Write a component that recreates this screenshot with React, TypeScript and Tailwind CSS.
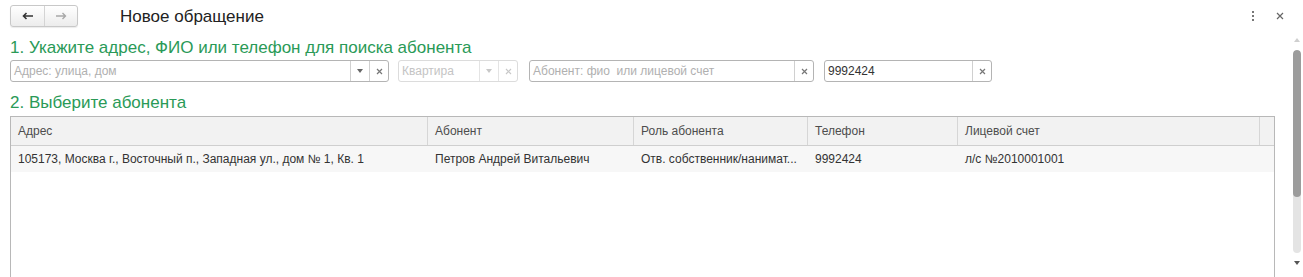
import { ReactNode } from 'react'

type Col = { title: string; width: string }

const cols: Col[] = [
  { title: 'Адрес', width: 'w-[417px]' },
  { title: 'Абонент', width: 'w-[206px]' },
  { title: 'Роль абонента', width: 'w-[174px]' },
  { title: 'Телефон', width: 'w-[150px]' },
  { title: 'Лицевой счет', width: 'w-[302px]' },
  { title: '', width: 'flex-1' },
]

const row = [
  '105173, Москва г., Восточный п., Западная ул., дом № 1, Кв. 1',
  'Петров Андрей Витальевич',
  'Отв. собственник/нанимат...',
  '9992424',
  'л/с №2010001001',
  '',
]

function Caret({ light }: { light?: boolean }) {
  return (
    <svg width="6" height="4" viewBox="0 0 6 4">
      <path d="M0 0h6L3 4z" fill={light ? '#c8c8c8' : '#666'} />
    </svg>
  )
}

function Cross({ light }: { light?: boolean }) {
  return (
    <svg width="7" height="7" viewBox="0 0 7 7">
      <path d="M1 1l5 5M6 1L1 6" stroke={light ? '#c8c8c8' : '#777'} strokeWidth="1.2" />
    </svg>
  )
}

function Field({
  width,
  text,
  placeholder,
  dropdown,
  disabled,
}: {
  width: string
  text?: string
  placeholder?: string
  dropdown?: boolean
  disabled?: boolean
}) {
  const border = disabled ? 'border-[#dcdcdc]' : 'border-[#b4b4b4]'
  return (
    <div className={`flex h-[22px] items-stretch rounded-[3px] border bg-white ${border} ${width}`}>
      <div
        className={`flex flex-1 items-center overflow-hidden whitespace-pre px-[3px] text-[12px] ${
          text ? 'text-[#333]' : disabled ? 'text-[#c4c4c4]' : 'text-[#b0b0b0]'
        }`}
      >
        {text ?? placeholder}
      </div>
      {dropdown && (
        <div className={`flex w-[19px] items-center justify-center border-l ${disabled ? 'border-[#e4e4e4]' : 'border-[#d0d0d0]'}`}>
          <Caret light={disabled} />
        </div>
      )}
      <div className={`flex w-[19px] items-center justify-center border-l ${disabled ? 'border-[#e4e4e4]' : 'border-[#d0d0d0]'}`}>
        <Cross light={disabled} />
      </div>
    </div>
  )
}

function Heading({ children }: { children: ReactNode }) {
  return <div className="h-[20px] text-[17px] leading-[20px] text-[#2a9a57]">{children}</div>
}

export default function App() {
  return (
    <div className="h-[277px] w-[1303px] overflow-hidden bg-white font-['Liberation_Sans',Arial,sans-serif] text-[#333]">
      {/* top bar */}
      <div className="mt-[5px] flex h-[22px] items-center pl-[10px] pr-[19px]">
        <div className="flex h-[22px] w-[68px] rounded-[3px] border border-[#c8c8c8] bg-gradient-to-b from-white to-[#ececec] shadow-[0_1px_1px_rgba(0,0,0,0.08)]">
          <div className="flex w-[34px] items-center justify-center border-r border-[#d4d4d4]">
            <svg width="12" height="8" viewBox="0 0 12 8">
              <path d="M11 4H2M4.5 1L1.5 4l3 3" stroke="#333" strokeWidth="1.6" fill="none" />
            </svg>
          </div>
          <div className="flex flex-1 items-center justify-center">
            <svg width="12" height="8" viewBox="0 0 12 8">
              <path d="M1 4h9M7.5 1l3 3-3 3" stroke="#a8a8a8" strokeWidth="1.4" fill="none" />
            </svg>
          </div>
        </div>
        <div className="ml-[42px] mt-[2px] text-[17px] text-[#222]">Новое обращение</div>
        <div className="ml-auto flex items-center gap-[22px]">
          <div className="flex flex-col gap-[2px]">
            <span className="h-[2px] w-[2px] bg-[#777]" />
            <span className="h-[2px] w-[2px] bg-[#777]" />
            <span className="h-[2px] w-[2px] bg-[#777]" />
          </div>
          <svg width="8" height="8" viewBox="0 0 8 8">
            <path d="M1 1l6 6M7 1L1 7" stroke="#666" strokeWidth="1.2" />
          </svg>
        </div>
      </div>

      <div className="mt-[10px] flex">
        <div className="flex-1 pl-[10px] pr-[17px]">
          <div className="pt-[1px]">
            <Heading>1. Укажите адрес, ФИО или телефон для поиска абонента</Heading>
          </div>
          <div className="mt-[2px] flex items-center">
            <Field width="w-[379px]" placeholder="Адрес: улица, дом" dropdown />
            <Field width="w-[120px] ml-[9px]" placeholder="Квартира" dropdown disabled />
            <Field width="w-[285px] ml-[11px]" placeholder="Абонент: фио  или лицевой счет" />
            <Field width="w-[168px] ml-[10px]" text="9992424" />
          </div>
          <div className="mt-[11px]">
            <Heading>2. Выберите абонента</Heading>
          </div>
          <div className="mt-[3px] h-[200px] border border-b-0 border-[#b8b8b8]">
            <div className="flex h-[29px] border-b border-[#cfcfcf] bg-[#f2f2f2]">
              {cols.map((c, i) => (
                <div
                  key={i}
                  className={`${c.width} flex items-center px-[7px] text-[12px] text-[#4d4d4d] ${
                    i < cols.length - 1 ? 'border-r border-[#d6d6d6]' : ''
                  }`}
                >
                  {c.title}
                </div>
              ))}
            </div>
            <div className="flex h-[26px] bg-[#f7f7f7]">
              {row.map((t, i) => (
                <div
                  key={i}
                  className={`${cols[i].width} flex items-center overflow-hidden whitespace-nowrap px-[7px] text-[12px] text-[#333]`}
                >
                  {t}
                </div>
              ))}
            </div>
          </div>
        </div>

        {/* scrollbar */}
        <div className="flex w-[16px] flex-col items-center pr-[2px]">
          <svg width="6" height="4" viewBox="0 0 6 4" className="mt-[1px]">
            <path d="M0 4h6L3 0z" fill="#cfcfcf" />
          </svg>
          <div className="mt-[8px] flex h-[203px] w-[8px] flex-col overflow-hidden rounded-full bg-[#e4e4e4]">
            <div className="h-[147px] rounded-full bg-[#9c9c9c]" />
          </div>
          <svg width="6" height="4" viewBox="0 0 6 4" className="mt-[8px]">
            <path d="M0 0h6L3 4z" fill="#555" />
          </svg>
        </div>
      </div>
    </div>
  )
}
